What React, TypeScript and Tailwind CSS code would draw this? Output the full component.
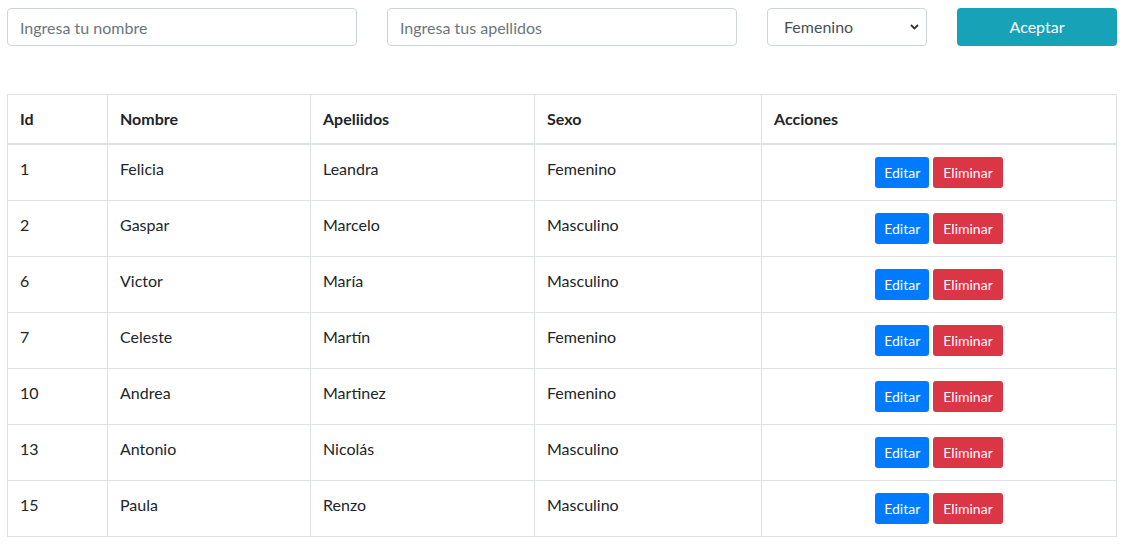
import React, { useState } from 'react';

type Persona = { id: number; nombre: string; apellidos: string; sexo: string };

const personas: Persona[] = [
  { id: 1, nombre: 'Felicia', apellidos: 'Leandra', sexo: 'Femenino' },
  { id: 2, nombre: 'Gaspar', apellidos: 'Marcelo', sexo: 'Masculino' },
  { id: 6, nombre: 'Victor', apellidos: 'María', sexo: 'Masculino' },
  { id: 7, nombre: 'Celeste', apellidos: 'Martín', sexo: 'Femenino' },
  { id: 10, nombre: 'Andrea', apellidos: 'Martinez', sexo: 'Femenino' },
  { id: 13, nombre: 'Antonio', apellidos: 'Nicolás', sexo: 'Masculino' },
  { id: 15, nombre: 'Paula', apellidos: 'Renzo', sexo: 'Masculino' },
];

export default function App() {
  const [nombre, setNombre] = useState('');
  const [apellidos, setApellidos] = useState('');
  const [sexo, setSexo] = useState('Femenino');

  return (
    <div className="min-h-screen bg-white text-[#212529] font-['Lato','Liberation_Sans',sans-serif] text-base">
      <div className="w-[1110px] ml-[7px] pt-2">
        <form className="flex gap-[30px]" onSubmit={(e) => e.preventDefault()}>
          <input
            value={nombre}
            onChange={(e) => setNombre(e.target.value)}
            placeholder="Ingresa tu nombre"
            className="w-[350px] h-[38px] px-3 border border-[#ced4da] rounded bg-white outline-none placeholder:text-[#6c757d]"
          />
          <input
            value={apellidos}
            onChange={(e) => setApellidos(e.target.value)}
            placeholder="Ingresa tus apellidos"
            className="w-[350px] h-[38px] px-3 border border-[#ced4da] rounded bg-white outline-none placeholder:text-[#6c757d]"
          />
          <div className="relative w-[160px] h-[38px]">
            <select
              value={sexo}
              onChange={(e) => setSexo(e.target.value)}
              className="appearance-none w-full h-full pl-4 pr-7 border border-[#ced4da] rounded bg-white text-[#495057] outline-none"
            >
              <option>Femenino</option>
              <option>Masculino</option>
            </select>
            <svg
              className="absolute right-[8px] top-[16px] pointer-events-none"
              width="9"
              height="6"
              viewBox="0 0 9 6"
              fill="none"
              stroke="#333"
              strokeWidth="1.8"
            >
              <path d="M1 1l3.5 3.5L8 1" />
            </svg>
          </div>
          <button type="submit" className="w-[160px] h-[38px] rounded bg-[#17a2b8] text-white">
            Aceptar
          </button>
        </form>

        <table className="w-full mt-12 border-collapse border border-[#dee2e6]">
          <thead>
            <tr className="text-left">
              <th className="w-[100px] border border-[#dee2e6] border-b-2 px-3 py-3 font-bold leading-6">Id</th>
              <th className="w-[203px] border border-[#dee2e6] border-b-2 px-3 py-3 font-bold leading-6">Nombre</th>
              <th className="w-[224px] border border-[#dee2e6] border-b-2 px-3 py-3 font-bold leading-6">Apeliidos</th>
              <th className="w-[227px] border border-[#dee2e6] border-b-2 px-3 py-3 font-bold leading-6">Sexo</th>
              <th className="border border-[#dee2e6] border-b-2 px-3 py-3 font-bold leading-6">Acciones</th>
            </tr>
          </thead>
          <tbody>
            {personas.map((p) => (
              <tr key={p.id} className="align-top">
                <td className="border border-[#dee2e6] px-3 py-3 leading-6">{p.id}</td>
                <td className="border border-[#dee2e6] px-3 py-3 leading-6">{p.nombre}</td>
                <td className="border border-[#dee2e6] px-3 py-3 leading-6">{p.apellidos}</td>
                <td className="border border-[#dee2e6] px-3 py-3 leading-6">{p.sexo}</td>
                <td className="border border-[#dee2e6] px-3 py-3">
                  <div className="flex justify-center gap-1">
                    <button className="h-[31px] px-[9px] rounded-[3px] bg-[#007bff] text-white text-sm">Editar</button>
                    <button className="h-[31px] px-[10px] rounded-[3px] bg-[#dc3545] text-white text-sm">Eliminar</button>
                  </div>
                </td>
              </tr>
            ))}
          </tbody>
        </table>
      </div>
    </div>
  );
}
